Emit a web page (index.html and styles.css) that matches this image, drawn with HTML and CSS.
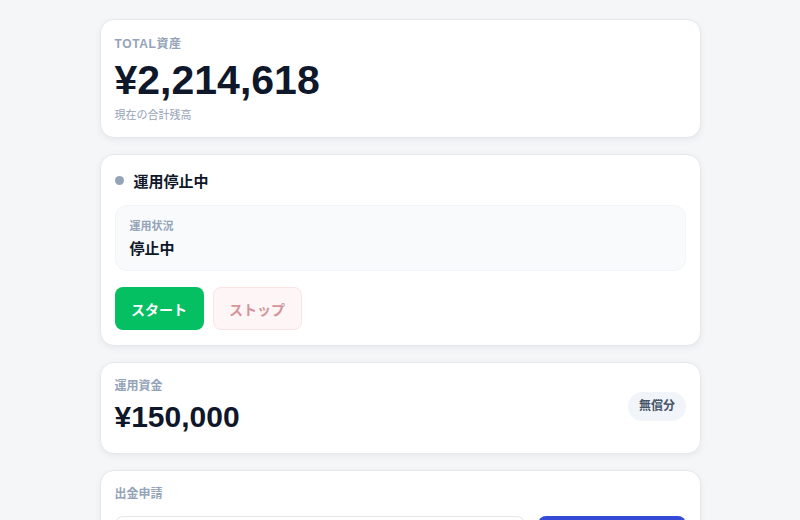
FILE: index.html
```html
<!DOCTYPE html>
<html lang="ja">
  <head>
    <meta charset="UTF-8" />
    <meta name="viewport" content="width=device-width, initial-scale=1.0" />
    <title>運用ダッシュボード</title>
    <link rel="stylesheet" href="styles.css">
  </head>
  <body>
    <div class="container">
      <div class="card">
        <div class="card-label total-label">TOTAL資産</div>
        <div class="total-amount">¥2,214,618</div>
        <div class="card-note">現在の合計残高</div>
      </div>

      <div class="card status-card">
        <div class="status-head">
          <span class="status-dot"></span>
          <span class="status-title">運用停止中</span>
        </div>
        <div class="status-box">
          <div class="status-label">運用状況</div>
          <div class="status-value">停止中</div>
        </div>
        <div class="btn-row">
          <button class="btn btn-start">スタート</button>
          <button class="btn btn-stop" disabled>ストップ</button>
        </div>
      </div>

      <div class="card fund-card">
        <div>
          <div class="card-label">運用資金</div>
          <div class="fund-amount">¥150,000</div>
        </div>
        <span class="badge">無償分</span>
      </div>

      <div class="card">
        <div class="card-label">出金申請</div>
        <div class="withdraw-row">
          <input type="text" class="withdraw-input" />
          <button class="btn btn-withdraw">出金する</button>
        </div>
      </div>
    </div>
  </body>
</html>
```

FILE: styles.css
```css
body {
  font-family: "Liberation Sans", "Noto Sans CJK JP", sans-serif;
  background-color: #f5f6f8;
  margin: 0;
  padding: 19px 20px;
  color: #0f172a;
}

.container {
  max-width: 601px;
  margin: 0 auto;
  display: flex;
  flex-direction: column;
  gap: 16px;
}

.card {
  background-color: white;
  border: 1px solid #e6e8ec;
  border-radius: 14px;
  box-shadow: 0 2px 6px rgba(15, 23, 42, 0.06);
  padding: 14px;
}

.card-label {
  font-size: 12px;
  line-height: 16px;
  font-weight: 700;
  color: #94a3b8;
  margin-top: 1px;
}

.total-label {
  letter-spacing: 0.05em;
  margin-top: 2px;
}

.total-amount {
  font-size: 41px;
  line-height: 48px;
  font-weight: 700;
  margin-top: 4px;
}

.card-note {
  font-size: 11px;
  line-height: 16px;
  color: #94a3b8;
  margin-top: 3px;
}

.status-card {
  padding-bottom: 15px;
}

.status-head {
  display: flex;
  align-items: center;
  gap: 10px;
  height: 22px;
}

.status-dot {
  width: 9px;
  height: 9px;
  border-radius: 50%;
  background-color: #94a3b8;
}

.status-title {
  font-size: 15px;
  font-weight: 700;
}

.status-box {
  margin-top: 14px;
  background-color: #f8fafc;
  border: 1px solid #f1f4f8;
  border-radius: 12px;
  padding: 12px 14px 10px;
}

.status-label {
  font-size: 11px;
  line-height: 16px;
  font-weight: 700;
  color: #94a3b8;
}

.status-value {
  font-size: 15px;
  line-height: 22px;
  font-weight: 700;
  margin-top: 4px;
}

.btn-row {
  display: flex;
  gap: 9px;
  margin-top: 16px;
}

.btn {
  font-family: inherit;
  height: 43px;
  padding: 0 15.5px;
  border: 1px solid transparent;
  border-radius: 8px;
  font-size: 14px;
  font-weight: 700;
  cursor: pointer;
}

.btn-start {
  background-color: #05c062;
  color: white;
}

.btn-stop {
  background-color: #fef6f6;
  border-color: #fbe3e4;
  color: #d49499;
  cursor: not-allowed;
}

.fund-card {
  display: flex;
  align-items: center;
  justify-content: space-between;
  padding-bottom: 17px;
}

.fund-amount {
  font-size: 30px;
  line-height: 38px;
  font-weight: 700;
  margin-top: 4px;
}

.badge {
  background-color: #f1f4f8;
  color: #475569;
  font-size: 12px;
  line-height: 17px;
  font-weight: 700;
  padding: 6px 10.5px;
  border-radius: 999px;
}

.withdraw-row {
  display: flex;
  gap: 13px;
  margin-top: 14px;
}

.withdraw-input {
  flex: 1;
  height: 44px;
  box-sizing: border-box;
  border: 1px solid #e2e5ea;
  border-radius: 8px;
  padding: 0 12px;
  font-size: 14px;
  outline: none;
}

.btn-withdraw {
  width: 148px;
  height: 44px;
  background-color: #3449d6;
  color: white;
}
```
